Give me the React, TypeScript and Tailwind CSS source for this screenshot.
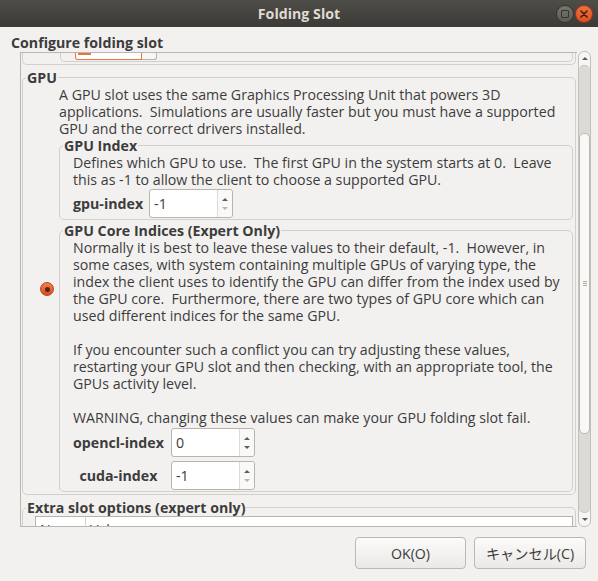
import React from "react";

function Spin({ value, downDim }: { value: string; downDim?: boolean }) {
  return (
    <div className="flex h-[29px] w-[84px] shrink-0 rounded-[3px] border border-[#b8b3ac] bg-white">
      <div className="flex flex-1 items-center pl-[4px] text-[#3c3c3c]">{value}</div>
      <div className="flex w-[15px] flex-col items-center justify-center gap-[6px] rounded-r-[3px] border-l border-[#dedad5] bg-[#f9f9f8]">
        <div className="h-0 w-0 border-x-[3px] border-b-[3px] border-x-transparent border-b-[#5e5e5e]" />
        {downDim ? (
          <div className="h-0 w-0 border-x-[3px] border-t-[3px] border-x-transparent border-t-[#b5b5b5]" />
        ) : (
          <div className="h-0 w-0 border-x-[3px] border-t-[3px] border-x-transparent border-t-[#5e5e5e]" />
        )}
      </div>
    </div>
  );
}

function Lines({ lines }: { lines: string[] }) {
  return (
    <div className="flex flex-col">
      {lines.map((l, i) => (
        <div key={i} className="h-[17px] whitespace-pre">
          {l}
        </div>
      ))}
    </div>
  );
}

export default function App() {
  return (
    <div className="flex h-[581px] w-[598px] flex-col overflow-hidden bg-[#f2f1f0] font-['Open_Sans','Noto_Sans_CJK_JP',sans-serif] text-[14.2px] leading-[17px] text-[#3c3c3c]">
      {/* Title bar */}
      <div className="grid h-[27px] shrink-0 grid-cols-[1fr_auto_1fr] items-center bg-gradient-to-b from-[#4e4d48] to-[#3b3a36]">
        <div />
        <div className="font-bold text-[#dfdbd2]">Folding Slot</div>
        <div className="flex justify-end gap-[1px] pr-[5px]">
          <div className="flex h-[18px] w-[18px] items-center justify-center rounded-full border border-[#34332f] bg-gradient-to-b from-[#777670] to-[#5c5b56]">
            <div className="h-[8px] w-[8px] rounded-[1px] border-[1.5px] border-[#34332f]" />
          </div>
          <div className="flex h-[18px] w-[18px] items-center justify-center rounded-full border border-[#9c3a1a] bg-gradient-to-b from-[#f0703f] to-[#dd4e22]">
            <svg width="8" height="8" viewBox="0 0 8 8">
              <path d="M1 1 L7 7 M7 1 L1 7" stroke="#3a1a0e" strokeWidth="1.5" strokeLinecap="round" />
            </svg>
          </div>
        </div>
      </div>

      {/* Header */}
      <div className="flex h-[25px] shrink-0 items-end pb-[1px] pl-[11px] font-bold">Configure folding slot</div>

      {/* Main scrolled area */}
      <div className="flex h-[475px] shrink-0 pl-[20px] pr-[7px]">
        <div className="flex-1 overflow-hidden border-y border-l border-[#bab6b0]">
          <div className="flex flex-col">
            {/* tail of previous frame */}
            <div className="mx-[1px] h-[12px] rounded-b-[5px] border-x border-b border-[#d3cfca]">
              <div className="ml-[37px] mr-[2px] h-[9px] rounded-b-[5px] border-x border-b border-[#d3cfca]">
                <div className="ml-[14px] flex h-[7px] w-[82px]">
                  <div className="w-[67px] rounded-bl-[3px] border-x border-b border-[#e9753f] bg-white">
                    <div className="ml-[2px] h-[2px] w-[13px] bg-[#e9753f]" />
                  </div>
                  <div className="w-[15px] rounded-br-[3px] border-b border-r border-[#b8b3ac] bg-[#f7f7f6]" />
                </div>
              </div>
            </div>

            {/* GPU frame */}
            <fieldset className="mx-[1px] mt-[4px] min-w-0 rounded-[5px] border border-[#d3cfca] p-0">
              <legend className="ml-[3px] px-[1px] font-bold">GPU</legend>
              <div className="flex pb-[2px]">
                <div className="flex w-[36px] shrink-0 items-center justify-end pr-[5px]">
                  <div className="flex h-[14px] w-[14px] items-center justify-center rounded-full border border-[#b8461d] bg-gradient-to-b from-[#f27d4c] to-[#dd4a18]">
                    <div className="h-[5px] w-[5px] rounded-full bg-[#4a2a1c]" />
                  </div>
                </div>
                <div className="mr-[2px] flex min-w-0 flex-1 flex-col">
                  <Lines
                    lines={[
                      "A GPU slot uses the same Graphics Processing Unit that powers 3D",
                      "applications.  Simulations are usually faster but you must have a supported",
                      "GPU and the correct drivers installed.",
                    ]}
                  />

                  <fieldset className="min-w-0 rounded-[5px] border border-[#d3cfca] p-0">
                    <legend className="ml-[3px] px-[1px] font-bold">GPU Index</legend>
                    <div className="flex flex-col pb-[1px] pl-[13px]">
                      <Lines
                        lines={[
                          "Defines which GPU to use.  The first GPU in the system starts at 0.  Leave",
                          "this as -1 to allow the client to choose a supported GPU.",
                        ]}
                      />
                      <div className="mt-[1px] flex items-center gap-[6px]">
                        <div className="font-bold">gpu-index</div>
                        <Spin value="-1" downDim />
                      </div>
                    </div>
                  </fieldset>

                  <fieldset className="mt-[2px] min-w-0 rounded-[5px] border border-[#d3cfca] p-0">
                    <legend className="ml-[3px] px-[1px] font-bold">GPU Core Indices (Expert Only)</legend>
                    <div className="flex flex-col pb-[1px] pl-[13px]">
                      <Lines
                        lines={[
                          "Normally it is best to leave these values to their default, -1.  However, in",
                          "some cases, with system containing multiple GPUs of varying type, the",
                          "index the client uses to identify the GPU can differ from the index used by",
                          "the GPU core.  Furthermore, there are two types of GPU core which can",
                          "used different indices for the same GPU.",
                          "",
                          "If you encounter such a conflict you can try adjusting these values,",
                          "restarting your GPU slot and then checking, with an appropriate tool, the",
                          "GPUs activity level.",
                          "",
                          "WARNING, changing these values can make your GPU folding slot fail.",
                        ]}
                      />
                      <div className="mt-[2px] grid grid-cols-[auto_auto] items-center justify-start gap-x-[7px] gap-y-[4px]">
                        <div className="justify-self-center font-bold">opencl-index</div>
                        <Spin value="0" />
                        <div className="justify-self-center font-bold">cuda-index</div>
                        <Spin value="-1" downDim />
                      </div>
                    </div>
                  </fieldset>
                </div>
              </div>
            </fieldset>

            {/* Extra slot options */}
            <fieldset className="mx-[1px] mt-[4px] min-w-0 rounded-[5px] border border-[#d3cfca] p-0">
              <legend className="ml-[3px] px-[1px] font-bold">Extra slot options (expert only)</legend>
              <div className="mr-[2px] pl-[12px]">
                <div className="flex h-[40px] border-x border-t border-[#b8b3ac] bg-white">
                  <div className="w-[50px] border-r border-[#d6d2cc] pl-[4px] pt-[4px]">Name</div>
                  <div className="flex-1 pl-[4px] pt-[4px]">Value</div>
                </div>
              </div>
            </fieldset>
          </div>
        </div>

        {/* Scrollbar */}
        <div className="ml-[1px] mt-[-1px] flex h-[476px] w-[13px] shrink-0 flex-col overflow-hidden rounded-[6px] border border-[#c3bfb9] bg-[#f7f6f5]">
          <div className="flex h-[13px] shrink-0 items-center justify-center">
            <div className="h-0 w-0 border-x-[3px] border-b-[3px] border-x-transparent border-b-[#5a5a5a]" />
          </div>
          <div className="flex flex-1 flex-col rounded-[5px] border-y border-[#c9c5bf] bg-[#dcdad6]">
            <div className="h-[67px] shrink-0" />
            <div className="flex h-[301px] shrink-0 flex-col items-center justify-center gap-[1px] rounded-[5px] border border-[#bcb8b2] bg-[#f8f8f7]">
              <div className="h-[1px] w-[4px] bg-[#b0aca6]" />
              <div className="h-[1px] w-[4px] bg-[#b0aca6]" />
              <div className="h-[1px] w-[4px] bg-[#b0aca6]" />
            </div>
          </div>
          <div className="flex h-[13px] shrink-0 items-center justify-center">
            <div className="h-0 w-0 border-x-[3px] border-t-[3px] border-x-transparent border-t-[#5a5a5a]" />
          </div>
        </div>
      </div>

      {/* Buttons */}
      <div className="flex justify-end gap-[8px] pr-[12px] pt-[10px]">
        <div className="flex h-[32px] w-[111px] items-center justify-center rounded-[4px] border border-[#bcb7b0] bg-gradient-to-b from-[#fbfbfa] to-[#ebe9e7]">
          OK(O)
        </div>
        <div className="flex h-[32px] w-[112px] items-center justify-center rounded-[4px] border border-[#bcb7b0] bg-gradient-to-b from-[#fbfbfa] to-[#ebe9e7]">
          キャンセル(C)
        </div>
      </div>
    </div>
  );
}
